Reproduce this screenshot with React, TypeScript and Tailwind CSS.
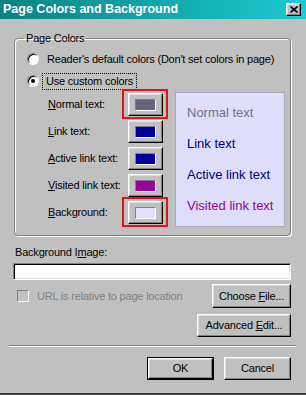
import React from 'react';

const raised =
  'border border-t-white border-l-white border-r-black border-b-black shadow-[inset_-1px_-1px_0_#808080,inset_1px_1px_0_#dfdfdf] bg-[#c0c0c0]';

interface ColorRowProps {
  label: React.ReactNode;
  color: string;
  marked?: boolean;
}

const ColorRow: React.FC<ColorRowProps> = ({ label, color, marked }) => (
  <div className="h-[27px] flex items-center">
    <span className="w-[80px]">{label}</span>
    <div className="relative">
      {marked && (
        <div className="absolute left-[-6px] right-[-5px] top-[-4px] bottom-[-3px] border-2 border-[#e3131b]" />
      )}
      <div className={`w-[35px] h-[23px] flex items-center justify-center ${raised}`}>
        <div className={`w-[21px] h-[12px] border border-t-[#808080] border-l-[#808080] border-r-white border-b-white ${color}`} />
      </div>
    </div>
  </div>
);

const Radio: React.FC<{ checked?: boolean }> = ({ checked }) => (
  <div className="w-[12px] h-[12px] rounded-full bg-white border border-t-[#808080] border-l-[#808080] border-r-white border-b-white shadow-[inset_1px_1px_0_#000] flex items-center justify-center">
    {checked && <div className="w-[4px] h-[4px] rounded-full bg-black" />}
  </div>
);

export default function App() {
  return (
    <div className="w-[306px] h-[395px] bg-[#c0c0c0] flex flex-col text-[11px] leading-[13px] tracking-[-0.2px] text-black font-['Liberation_Sans',Arial,sans-serif] border-b-2 border-[#404040] overflow-hidden">
      {/* title bar */}
      <div className="h-[19px] shrink-0 flex items-center justify-between pl-[3px] pr-[5px] bg-gradient-to-r from-[#0a8282] to-[#1ccad2]">
        <span className="text-white font-bold text-[12.5px] tracking-normal">Page Colors and Background</span>
        <div className={`w-[15px] h-[13px] flex items-center justify-center ${raised}`}>
          <svg width="8" height="7" viewBox="0 0 8 7">
            <path d="M0.5 0.5 L7.5 6.5 M7.5 0.5 L0.5 6.5" stroke="#000" strokeWidth="1.6" />
          </svg>
        </div>
      </div>

      <div className="flex-1 flex flex-col pl-[9px] pr-[10px]">
        <fieldset className="mt-[13px] ml-[5px] mr-[5px] pb-[8px] border border-[#808080] rounded-[4px] shadow-[inset_1px_1px_0_#fff,1px_1px_0_#fff]">
          <legend className="ml-[9px] px-[2px]">Page Colors</legend>

          <div className="pl-[12px] pt-[7px] flex flex-col">
            <div className="h-[14px] flex items-center gap-[8px]">
              <Radio />
              <span>Reader's default colors (Don't set colors in page)</span>
            </div>
            <div className="h-[14px] mt-[8px] flex items-center gap-[4px]">
              <Radio checked />
              <span className="px-[3px] py-[1px] outline outline-1 outline-dotted outline-black">Use custom colors</span>
            </div>
          </div>

          <div className="mt-[3px] pl-[33px] flex">
            <div className="flex flex-col">
              <ColorRow label={<><u>N</u>ormal text:</>} color="bg-[#64647a]" marked />
              <ColorRow label={<><u>L</u>ink text:</>} color="bg-[#0000a0]" />
              <ColorRow label={<><u>A</u>ctive link text:</>} color="bg-[#0000a0]" />
              <ColorRow label={<><u>V</u>isited link text:</>} color="bg-[#9a00a0]" />
              <ColorRow label={<><u>B</u>ackground:</>} color="bg-[#e0e0fc]" marked />
            </div>
            <div className="ml-[12px] mt-[1px] w-[110px] h-[135px] bg-[#dedefa] border border-[#a8a8b8] pl-[11px] pt-[4px] text-[13px] leading-[31px] tracking-normal flex flex-col">
              <span className="text-[#70708a]">Normal text</span>
              <span className="text-[#000080]">Link text</span>
              <span className="text-[#000080]">Active link text</span>
              <span className="text-[#990099]">Visited link text</span>
            </div>
          </div>
        </fieldset>

        <div className="mt-[10px] ml-[6px]">
          Background I<u>m</u>age:
        </div>
        <div className="mt-[4px] ml-[4px] mr-[5px] h-[17px] bg-white border border-t-[#808080] border-l-[#808080] border-r-white border-b-white shadow-[inset_1px_1px_0_#000,inset_-1px_-1px_0_#dfdfdf]" />

        <div className="mt-[4px] mr-[5px] h-[24px] flex items-center">
          <div className="ml-[8px] w-[12px] h-[12px] bg-[#c0c0c0] border border-t-[#808080] border-l-[#808080] border-r-white border-b-white" />
          <span className="ml-[8px] text-[#808080]">URL is relative to page location</span>
          <div className={`ml-auto w-[79px] h-[24px] flex items-center justify-center ${raised}`}>
            <span>Choose <u>F</u>ile...</span>
          </div>
        </div>

        <div className="mt-[6px] mr-[5px] flex justify-end">
          <div className={`w-[94px] h-[23px] flex items-center justify-center ${raised}`}>
            <span>Advanced <u>E</u>dit...</span>
          </div>
        </div>

        <div className="mt-[8px] h-[2px] border-t border-t-[#808080] border-b border-b-white" />

        <div className="mt-[10px] mr-[5px] flex justify-end gap-[10px]">
          <div className="w-[67px] h-[23px] border border-black">
            <div className={`w-full h-full flex items-center justify-center ${raised}`}>OK</div>
          </div>
          <div className={`w-[67px] h-[23px] flex items-center justify-center ${raised}`}>Cancel</div>
        </div>
      </div>
    </div>
  );
}
